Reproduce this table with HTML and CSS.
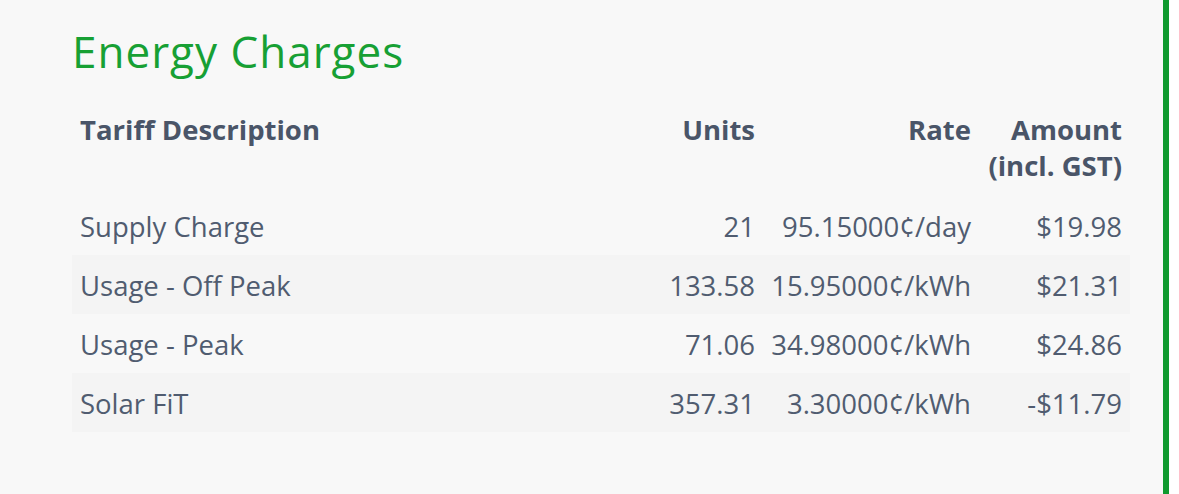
FILE: index.html
```html
<!DOCTYPE html>
<html>
<head>
<meta charset="utf-8">
<link rel="stylesheet" href="styles.css">
</head>
<body>
<div class="page">
  <h1 class="title">Energy Charges</h1>
  <table class="charges">
    <colgroup>
      <col class="c-desc">
      <col class="c-units">
      <col class="c-rate">
      <col class="c-amount">
    </colgroup>
    <thead>
      <tr>
        <th class="left">Tariff Description</th>
        <th class="right">Units</th>
        <th class="right">Rate</th>
        <th class="right">Amount (incl. GST)</th>
      </tr>
    </thead>
    <tbody>
      <tr>
        <td class="left">Supply Charge</td>
        <td class="right">21</td>
        <td class="right">95.15000¢/day</td>
        <td class="right">$19.98</td>
      </tr>
      <tr class="striped">
        <td class="left">Usage - Off Peak</td>
        <td class="right">133.58</td>
        <td class="right">15.95000¢/kWh</td>
        <td class="right">$21.31</td>
      </tr>
      <tr>
        <td class="left">Usage - Peak</td>
        <td class="right">71.06</td>
        <td class="right">34.98000¢/kWh</td>
        <td class="right">$24.86</td>
      </tr>
      <tr class="striped">
        <td class="left">Solar FiT</td>
        <td class="right">357.31</td>
        <td class="right">3.30000¢/kWh</td>
        <td class="right">-$11.79</td>
      </tr>
    </tbody>
  </table>
</div>
</body>
</html>
```
FILE: styles.css
```css
html, body {
  margin: 0;
  padding: 0;
  background: #ffffff;
}
body {
  display: flex;
  font-family: "Open Sans", "Noto Sans", sans-serif;
  color: #4a5568;
}
.page {
  width: 1169px;
  height: 494px;
  box-sizing: border-box;
  background: #f8f8f8;
  border-right: 6px solid #0f9a2f;
  padding: 25px 33px 0 72px;
}
.title {
  margin: 0 0 23px 0;
  font-size: 44px;
  line-height: 52px;
  font-weight: 400;
  letter-spacing: 1px;
  color: #17a034;
}
.charges {
  width: 1058px;
  table-layout: fixed;
  border-collapse: collapse;
  font-size: 27.5px;
}
.c-desc { width: 589px; }
.c-units { width: 102px; }
.c-rate { width: 216px; }
.c-amount { width: 151px; }
.charges th {
  font-weight: 700;
  line-height: 36px;
  padding: 12px 8px;
  vertical-align: top;
}
.charges td {
  line-height: 35px;
  padding: 13px 8px 11px;
  color: #505c70;
}
.left { text-align: left; }
.right { text-align: right; }
.striped { background: #f4f4f4; }
```
